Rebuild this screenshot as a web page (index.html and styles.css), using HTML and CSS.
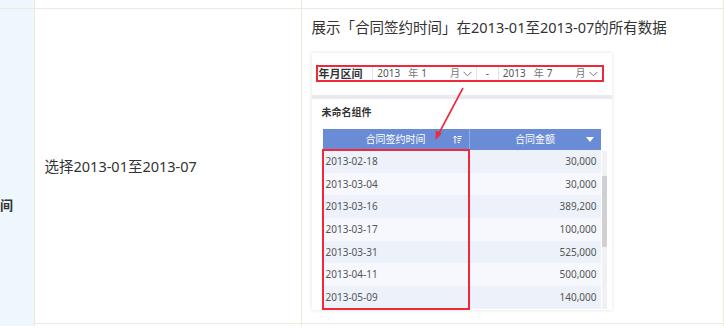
FILE: index.html
```html
<!DOCTYPE html>
<html lang="zh-CN">
<head>
    <meta charset="UTF-8">
    <title>年月区间</title>
    <link rel="stylesheet" href="styles.css">
</head>
<body>
    <table class="doc">
        <colgroup>
            <col class="col-head">
            <col class="col-desc">
            <col>
        </colgroup>
        <tr class="row-prev">
            <td class="head"></td>
            <td></td>
            <td></td>
        </tr>
        <tr>
            <td class="head" rowspan="2"><div class="head-text">间</div></td>
            <td class="desc">选择2013-01至2013-07</td>
            <td class="demo">
                <p class="demo-title">展示「合同签约时间」在2013-01至2013-07的所有数据</p>
                <div class="shot">
                    <div class="filter-area">
                        <div class="filter">
                            <span class="filter-label">年月区间</span>
                            <div class="ym">
                                <span class="ym-year">2013</span>
                                <span class="ym-unit">年</span>
                                <span class="ym-num">1</span>
                                <span class="ym-unit">月</span>
                                <svg class="chev" width="9" height="6" viewBox="0 0 9 6"><path d="M0.5 0.8 L4.5 4.8 L8.5 0.8" fill="none" stroke="#777" stroke-width="1"/></svg>
                            </div>
                            <span class="dash">-</span>
                            <div class="ym">
                                <span class="ym-year">2013</span>
                                <span class="ym-unit">年</span>
                                <span class="ym-num">7</span>
                                <span class="ym-unit">月</span>
                                <svg class="chev" width="9" height="6" viewBox="0 0 9 6"><path d="M0.5 0.8 L4.5 4.8 L8.5 0.8" fill="none" stroke="#777" stroke-width="1"/></svg>
                            </div>
                        </div>
                    </div>
                    <div class="widget">
                        <div class="widget-title">未命名组件</div>
                        <div class="grid-wrap">
                            <div class="grid">
                                <div class="grid-head">
                                    <div class="gh gh-date">合同签约时间
                                        <svg class="sort" width="9" height="9" viewBox="0 0 9 9"><path d="M2 8.5 V1 M0.3 2.8 L2 1 L3.7 2.8" fill="none" stroke="#fff" stroke-width="1"/><path d="M4.5 1.5 H8.8 M4.5 3.5 H8.2 M4.5 5.5 H7.5 M4.5 7.5 H6.8" stroke="#fff" stroke-width="1"/></svg>
                                    </div>
                                    <div class="gh gh-amount">合同金额
                                        <svg class="tri" width="8" height="5" viewBox="0 0 8 5"><path d="M0 0 H8 L4 5 Z" fill="#fff"/></svg>
                                    </div>
                                </div>
                                <div class="grid-row"><span>2013-02-18</span><span>30,000</span></div>
                                <div class="grid-row"><span>2013-03-04</span><span>30,000</span></div>
                                <div class="grid-row"><span>2013-03-16</span><span>389,200</span></div>
                                <div class="grid-row"><span>2013-03-17</span><span>100,000</span></div>
                                <div class="grid-row"><span>2013-03-31</span><span>525,000</span></div>
                                <div class="grid-row"><span>2013-04-11</span><span>500,000</span></div>
                                <div class="grid-row"><span>2013-05-09</span><span>140,000</span></div>
                                <div class="mark-col"></div>
                            </div>
                            <div class="scrollbar"><div class="thumb"></div></div>
                        </div>
                    </div>
                    <svg class="arrow" width="60" height="60" viewBox="0 0 60 60">
                        <path d="M41 1 L16 48" stroke="#f0283a" stroke-width="1.6" fill="none"/>
                        <path d="M13.5 53 L13.8 43.5 L19.8 46.6 Z" fill="#f0283a"/>
                    </svg>
                </div>
            </td>
        </tr>
        <tr class="row-next">
            <td></td>
            <td></td>
        </tr>
    </table>
</body>
</html>
```

FILE: styles.css
```css
body {
    margin: 0;
    padding: 0;
    font-family: "Noto Sans", "Noto Sans CJK SC", sans-serif;
    color: #333;
    background: #fff;
    overflow: hidden;
}

.doc {
    width: 724px;
    border-collapse: collapse;
    table-layout: fixed;
}

.col-head {
    width: 34px;
}

.col-desc {
    width: 267px;
}

.doc td {
    border: 1px solid #ece9dd;
    padding: 0;
    vertical-align: top;
}

.doc tr:first-child td {
    border-top: none;
}

.row-prev td {
    height: 8px;
}

.row-next td {
    height: 2px;
    border-bottom: none;
}

.head {
    background: #eef6fe;
    border-left: none !important;
    border-bottom: none !important;
    overflow: hidden;
}

.head-text {
    margin-top: 187px;
    white-space: nowrap;
    font-size: 13px;
    font-weight: bold;
    line-height: 18px;
    color: #333;
}

.desc {
    vertical-align: middle !important;
    padding-left: 10px !important;
    font-size: 14.5px;
    line-height: 20px;
}

.demo {
    padding: 8px 0 13px 10px !important;
}

.demo-title {
    margin: 0;
    font-size: 14.5px;
    line-height: 20px;
    white-space: nowrap;
}

.shot {
    position: relative;
    width: 300px;
    margin-top: 16px;
    background: #fff;
    box-shadow: 0 0 4px rgba(0, 0, 0, 0.12);
}

.filter-area {
    padding: 12px 8px 13px 4px;
    border-bottom: 4px solid #e9e9ef;
}

.filter {
    display: flex;
    align-items: stretch;
    height: 13px;
    border: 2px solid #f0283a;
    font-size: 10px;
    line-height: 13px;
    color: #555;
}

.filter-label {
    width: 54px;
    padding-left: 1px;
    font-size: 11px;
    font-weight: bold;
    color: #333;
    border-right: 1px solid #e4e4e8;
}

.ym {
    display: flex;
    align-items: center;
    width: 99px;
    padding-left: 4px;
}

.ym-year {
    width: 31px;
}

.ym-unit {
    width: 13px;
    color: #777;
}

.ym-num {
    flex: 1;
}

.chev {
    margin-right: 4px;
}

.dash {
    width: 21px;
    text-align: center;
    border-left: 1px solid #e4e4e8;
    border-right: 1px solid #e4e4e8;
}

.widget {
    padding: 4px 4px 1px 10px;
}

.widget-title {
    height: 26px;
    font-size: 10px;
    font-weight: bold;
    line-height: 18px;
    color: #333;
}

.grid-wrap {
    display: flex;
    margin-left: 1px;
}

.grid {
    position: relative;
    width: 278px;
    flex-shrink: 0;
}

.grid-head {
    display: flex;
    height: 21px;
    background: #6a8bd5;
    color: #fff;
    font-size: 10px;
    line-height: 21px;
}

.gh {
    position: relative;
    text-align: center;
}

.gh-date {
    width: 146px;
    border-right: 1px solid #93abe4;
}

.gh-amount {
    flex: 1;
}

.sort {
    position: absolute;
    right: 7px;
    top: 6px;
}

.tri {
    position: absolute;
    right: 7px;
    top: 8px;
}

.grid-row {
    display: flex;
    height: 22.7px;
    font-size: 10px;
    line-height: 22.7px;
    color: #555;
    background: #edf2fa;
}

.grid-row:nth-of-type(odd) {
    background: #f6f8fd;
}

.grid-row span:first-child {
    width: 144px;
    padding-left: 3px;
}

.grid-row span:last-child {
    flex: 1;
    text-align: right;
    padding-right: 4px;
}

.mark-col {
    position: absolute;
    left: -1px;
    top: 20px;
    width: 144px;
    height: 157px;
    border: 2px solid #f0283a;
}

.scrollbar {
    width: 5px;
    margin: 22px 0 0 1px;
    background: #f1f1f3;
}

.thumb {
    height: 71px;
    margin-top: 25px;
    background: #cfcfd4;
}

.arrow {
    position: absolute;
    left: 110px;
    top: 34px;
}
```
